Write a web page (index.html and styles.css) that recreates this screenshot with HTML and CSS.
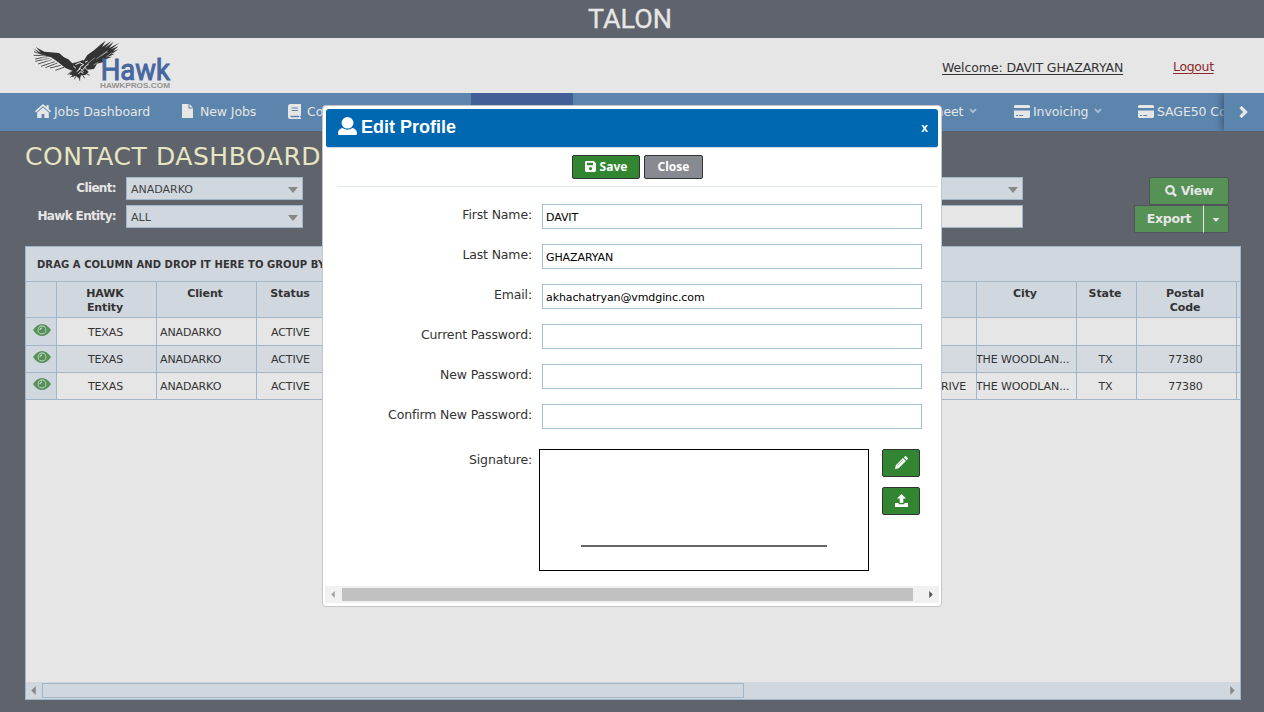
FILE: index.html
```html
<!DOCTYPE html>
<html lang="en">
<head>
<meta charset="utf-8">
<title>Talon - Contact Dashboard</title>
<link rel="stylesheet" href="styles.css">
</head>
<body>
<svg class="sprite" aria-hidden="true">
  <symbol id="home" viewBox="0 0 16 14"><path d="M8 0 0 7l1 1.400L8 2.300l7 6.100L16 7l-2.300-2V1h-2.200v2z"/><path d="M8 3.400 2.200 8.400V14h4.400v-4h2.800v4h4.400V8.400z"/></symbol>
  <symbol id="file" viewBox="0 0 11 14"><path d="M0 0h6.500v4.500H11V14H0z"/><path d="M7.500 0 11 3.500H7.500z"/></symbol>
  <symbol id="book" viewBox="0 0 13 15"><path fill-rule="evenodd" d="M2.500 0H13v11.500l-.7.5v1.500l.7.500v1H2.500A2.500 2.500 0 0 1 0 12.500v-10A2.500 2.500 0 0 1 2.500 0zM3.500 3.500v1H10v-1zM3.500 6v1H10V6zM2.600 11.800v1.400h8.600v-1.400z"/></symbol>
  <symbol id="card" viewBox="0 0 16 13"><path fill-rule="evenodd" d="M1 0h14l1 1v2H0V1zM0 5.500h16V12l-1 1H1l-1-1zM2 10v1h2v-1zM5.200 10v1h4v-1z"/></symbol>
  <symbol id="down" viewBox="0 0 8 6"><path d="m1 1.200 3 3 3-3" fill="none" stroke="currentColor" stroke-width="1.900"/></symbol>
  <symbol id="tri" viewBox="0 0 10 6"><path d="M0 0h10L5 6z"/></symbol>
  <symbol id="left" viewBox="0 0 5 10"><path d="M5 0v10L0 5z"/></symbol>
  <symbol id="right" viewBox="0 0 5 10"><path d="M0 0v10l5-5z"/></symbol>
  <symbol id="eye" viewBox="0 0 18 12"><path fill-rule="evenodd" d="M0 6Q4 0 9 0t9 6q-4 6-9 6T0 6zM9 1.600a4.400 4.400 0 1 0 0 8.800 4.400 4.400 0 0 0 0-8.800z"/><circle cx="9" cy="6" r="3.600"/><path d="M6.900 6Q7 4 9 3.900" fill="none" stroke="#e6e6e6" stroke-width="1"/></symbol>
  <symbol id="search" viewBox="0 0 12 12"><circle cx="5" cy="5" r="3.800" fill="none" stroke="currentColor" stroke-width="2.200"/><path d="m7.600 7.600 3.500 3.500" stroke="currentColor" stroke-width="2.600"/></symbol>
  <symbol id="user" viewBox="0 0 19 18"><ellipse cx="9.500" cy="5.800" rx="6" ry="5.800"/><path d="M0 16.500C0 13 2 11.800 4.500 11q5 3.400 10 0C17 11.800 19 13 19 16.500q0 1.500-1.500 1.500h-16Q0 18 0 16.500z"/></symbol>
  <symbol id="save" viewBox="0 0 11 11"><path fill-rule="evenodd" d="M1 0h7.800L11 2.200V10l-1 1H1l-1-1V1zM2 1.700v2.600h6V1.700zM5.500 6a1.600 1.600 0 1 0 0 3.200 1.600 1.600 0 0 0 0-3.200z"/></symbol>
  <symbol id="pencil" viewBox="0 0 13 13"><path d="M0 13 .8 9.300 8 2.100 10.900 5 3.700 12.200zM8.800 1.300 9.700.4q.8-.8 1.600 0l1.300 1.300q.8.800 0 1.600l-.9.900z"/><path d="m2.300 9.700 5.500-5.500" stroke="#328632" stroke-width=".5"/></symbol>
  <symbol id="upload" viewBox="0 0 13 13"><path d="M6.500 0 11 4.500H8.300V9H4.700V4.500H2zM0 9h3.600v1.300h5.800V9H13v4H0z"/></symbol>
</svg>

<div class="page">
  <header class="topbar">
    <svg class="talon" viewBox="0 0 96 34"><text x="6" y="25.500" textLength="84" lengthAdjust="spacingAndGlyphs">TALON</text></svg>
  </header>

  <div class="brandbar">
    <svg class="hawk-logo" viewBox="0 0 465 174">
      <g fill="#333">
        <path d="M24 37 48 50 32 33 58 47 102 51 117 64 130 70 142 82 158 78 174 72 185 82 178 99 163 108 145 106 121 96 99 78 78 64 49 57z"/>
        <path d="M176 74 187 57 207 43 228 25 242 14 231 33 259 15 240 36 266 17 252 37 283 20 258 40 280 31 264 46 281 40 258 55 270 53 248 63 261 62 237 72 244 76 216 83 207 99 187 101 178 90z"/>
        <path d="m143 105 18-14 16 2 14 15-10 9-13 1-4 11-12-10-11 5 1-8-9 1 5-7-6-1z"/>
      </g>
      <g fill="none" stroke="#333" stroke-width="2.500">
        <path d="M54 57 27 47M60 59 26 58M67 62 30 69M73 67 31 76M80 71 39 84M89 77 48 91M97 81 61 95M107 88 75 96M117 94 91 103"/>
        <path d="m146 108-18 7M151 112l-15 12M157 113l-9 17M164 115v19M170 113l9 14M177 109l17 9"/>
      </g>
      <g fill="none" stroke="#e6e6e6" stroke-width="3">
        <path d="m151 86 14-6 11 6-8 4-7 11M170 106l12-16 9-6M155 107l11-9 10 9M153 97l-8-7M180 79l8-4M160 114l7-7 8 5"/>
        <path d="M40 54 64 61M46 61 74 69M50 69 83 76M64 78 91 84M187 84l13-11 10-8M214 69l19-14 16-8M229 61l17-17M244 63l16-13M205 87l15-8" stroke-width="1.500"/>
      </g>
      <text class="hawk-name" x="227" y="132" textLength="208" lengthAdjust="spacingAndGlyphs">Hawk</text>
      <text class="hawk-site" x="225" y="155" textLength="210" lengthAdjust="spacingAndGlyphs">HAWKPROS.COM</text>
    </svg>
    <div class="account"><a class="welcome">Welcome: DAVIT GHAZARYAN</a><a class="logout">Logout</a></div>
  </div>

  <nav class="nav">
    <div class="nav-items">
      <a><svg class="i-home"><use href="#home"/></svg>Jobs Dashboard</a>
      <a><svg class="i-file"><use href="#file"/></svg>New Jobs</a>
      <a><svg class="i-book"><use href="#book"/></svg>Contacts</a>
      <a class="active"></a>
      <a></a>
      <a><svg class="i-sheet"><use href="#file"/></svg></a>
      <a><svg class="i-sheet"><use href="#file"/></svg>Timesheet<svg class="i-down"><use href="#down"/></svg></a>
      <a><svg class="i-card"><use href="#card"/></svg>Invoicing<svg class="i-down"><use href="#down"/></svg></a>
      <a><svg class="i-card"><use href="#card"/></svg>SAGE50 Contacts</a>
    </div>
    <div class="nav-next"><svg viewBox="0 0 9 12"><path d="m1.500 1 5 5-5 5" fill="none" stroke="currentColor" stroke-width="3.200"/></svg></div>
  </nav>

  <main>
    <h1><span>CONTACT DASHBOARD</span></h1>
    <section class="filters">
      <label>Client:</label><div class="select">ANADARKO<svg><use href="#tri"/></svg></div>
      <div class="select far"><svg><use href="#tri"/></svg></div>
      <div class="actions"><button class="btn view"><svg><use href="#search"/></svg>View</button></div>
      <label>Hawk Entity:</label><div class="select">ALL<svg><use href="#tri"/></svg></div>
      <div class="select far plain"></div>
      <div class="actions"><button class="btn export">Export</button><button class="btn caret"><svg><use href="#tri"/></svg></button></div>
    </section>

    <section class="datagrid">
      <div class="group"><span>DRAG A COLUMN AND DROP IT HERE TO GROUP BY</span></div>
      <div class="row head"><b></b><b>HAWK<br>Entity</b><b>Client</b><b>Status</b><b></b><b>City</b><b>State</b><b>Postal<br>Code</b><b></b></div>
      <div class="row"><i><svg><use href="#eye"/></svg></i><i>TEXAS</i><i class="l">ANADARKO</i><i>ACTIVE</i><i></i><i></i><i></i><i></i><i></i></div>
      <div class="row alt"><i><svg><use href="#eye"/></svg></i><i>TEXAS</i><i class="l">ANADARKO</i><i>ACTIVE</i><i></i><i class="city">THE WOODLAN...</i><i>TX</i><i>77380</i><i></i></div>
      <div class="row"><i><svg><use href="#eye"/></svg></i><i>TEXAS</i><i class="l">ANADARKO</i><i>ACTIVE</i><i class="r">DRIVE</i><i class="city">THE WOODLAN...</i><i>TX</i><i>77380</i><i></i></div>
      <div class="blank"></div>
      <div class="hscroll"><svg><use href="#left"/></svg><div class="thumb"></div><svg><use href="#right"/></svg></div>
    </section>
  </main>

  <div class="modal">
    <div class="modal-head"><svg><use href="#user"/></svg><span class="modal-title">Edit Profile</span><span class="x">x</span></div>
    <div class="modal-actions"><button class="mbtn save"><svg><use href="#save"/></svg>Save</button><button class="mbtn close">Close</button></div>
    <form>
      <div class="field"><label>First Name:</label><div class="input">DAVIT</div></div>
      <div class="field"><label>Last Name:</label><div class="input">GHAZARYAN</div></div>
      <div class="field"><label>Email:</label><div class="input">akhachatryan@vmdginc.com</div></div>
      <div class="field"><label>Current Password:</label><div class="input"></div></div>
      <div class="field"><label>New Password:</label><div class="input"></div></div>
      <div class="field"><label>Confirm New Password:</label><div class="input"></div></div>
      <div class="field sign"><label>Signature:</label><div class="pad"><div></div></div>
        <div class="tools"><button class="mbtn"><svg><use href="#pencil"/></svg></button><button class="mbtn"><svg><use href="#upload"/></svg></button></div></div>
    </form>
    <div class="mscroll"><svg class="dim"><use href="#left"/></svg><div></div><svg><use href="#right"/></svg></div>
  </div>
</div>
</body>
</html>
```
FILE: styles.css
```css
* { box-sizing: border-box; }
body { margin: 0; font: 12px "DejaVu Sans", sans-serif; color: #333; background: #5f636c; }
svg { fill: currentColor; flex: none; }
button { font-family: inherit; margin: 0; padding: 0; }
.sprite { display: none; }
.page { position: relative; width: 1264px; height: 712px; overflow: hidden; }

.topbar { height: 38px; display: flex; justify-content: center; padding-top: 2px; }
.talon { width: 96px; height: 34px; margin-right: 4px; color: #e6e6e6; }
.talon text { font: 25.500px Roboto, sans-serif; stroke: #e6e6e6; stroke-width: .3; }

.brandbar { height: 55px; background: #e6e6e6; display: flex; justify-content: space-between; }
.hawk-logo { width: 155px; height: 58px; margin: -2px 0 -1px 25px; }
.hawk-name { font: 400 86px Roboto, sans-serif; fill: #4767a0; stroke: #4767a0; stroke-width: 3; }
.hawk-site { font: bold 24px "Liberation Sans", sans-serif; fill: #929292; }
.account { display: flex; gap: 50px; padding: 21px 50px 0 0; font-size: 12.5px; line-height: 15px; }
.account a { white-space: nowrap; text-decoration: underline; text-underline-offset: 2px; }
.welcome { width: 181px; padding-top: 1px; letter-spacing: -.1px; }
.logout { width: 41px; color: #8d2929; letter-spacing: -.35px; }

.nav { height: 38px; background: #5b85ad; display: flex; color: #e6e6e6; }
.nav-items { width: 1224px; overflow: hidden; padding-left: 35px; display: grid; grid-template-columns: 147px 106px 183px 102px 199px 112px 130px 124px 86px; }
.nav-items a { display: flex; align-items: center; white-space: nowrap; font-size: 12.5px; letter-spacing: -.1px; padding-bottom: 2px; }
.nav-items .active { background: #435f97; }
.i-home { width: 16px; height: 14px; margin-right: 3px; }
.i-file { width: 11px; height: 14px; margin-right: 7px; }
.i-book { width: 13px; height: 15px; margin-right: 6px; }
.i-sheet { width: 10px; height: 15px; margin-right: 5px; }
.i-card { width: 16px; height: 13px; margin-right: 3px; }
.i-down { width: 8px; height: 6px; margin-left: 6px; color: #abc0d4; }
.nav-next { width: 40px; background: #5b85ad; box-shadow: -2px 0 7px #3c5975; display: flex; align-items: center; padding-left: 15px; clip-path: inset(0 0 0 -10px); }
.nav-next svg { width: 9px; height: 12px; }

main { padding: 8px 23px 0 25px; }
h1 { margin: 0; height: 38px; font-size: 25px; line-height: 35px; font-weight: 400; color: #e6e6c3; letter-spacing: .55px; white-space: nowrap; }
.filters { display: grid; grid-template-columns: 91px 177px 1fr 206px; column-gap: 10px; grid-auto-rows: 28px; margin-right: 2px; }
.filters label { font-weight: bold; font-size: 12px; line-height: 22px; text-align: right; color: #e6e6e6; white-space: nowrap; letter-spacing: -.65px; }
.select { height: 23px; border: 1px solid #a2b6c9; background: #d0d7df; font-size: 11px; color: #444; padding: 2px 4px 0; display: flex; align-items: center; justify-content: space-between; }
.select svg { width: 10px; height: 6px; color: #888; }
.far { justify-content: flex-end; margin-left: 60px; }
.plain { background: #e6e6e6; }
.actions { display: flex; justify-content: flex-end; padding-right: 10px; }
.btn { height: 28px; border: 1px solid #50545a; border-radius: 2px; background: #569156; color: #e6e6e6; font-weight: bold; font-size: 12.5px; display: flex; align-items: center; justify-content: center; padding-bottom: 1px; letter-spacing: -.3px; }
.view { width: 80px; gap: 4px; }
.view svg { width: 12px; height: 12px; }
.export { width: 70px; border-right: 1px solid #e6e6e6; border-radius: 2px 0 0 2px; }
.caret { width: 25px; border-left: 0; border-radius: 0 2px 2px 0; padding-top: 3px; }
.caret svg { width: 8px; height: 4px; }

.datagrid { width: 1216px; height: 454px; margin-top: 13px; border: 1px solid #a2b6c9; background: #e6e6e6; display: flex; flex-direction: column; }
.group { height: 35px; flex: none; background: #d0d7df; border-bottom: 1px solid #a2b6c9; padding-left: 11px; font: bold 10px/36px "DejaVu Sans", sans-serif; letter-spacing: .07px; white-space: nowrap; }
.row { flex: none; height: 27px; display: grid; grid-template-columns: 31px 100px 100px 70px 650px 100px 60px 100px 3px; border-bottom: 1px solid #a2b6c9; font-size: 11px; }
.group + .row { height: 36px; }
.head + .row { height: 28px; }
.row > * { border-right: 1px solid #a2b6c9; text-align: center; font-style: normal; line-height: 28px; overflow: hidden; white-space: nowrap; letter-spacing: -.1px; padding-right: 2px; }
.row > :last-child { border-right: 0; padding: 0; }
.head + .row > * { line-height: 29px; }
.head { background: #d0d7df; }
.head > b { line-height: 14px; padding-top: 5px; padding-right: 3px; letter-spacing: -.1px; }
.row > i:first-child { background: #d0d7df; display: flex; justify-content: center; padding: 5px 0 0 1px; }
.head + .row > i:first-child { padding-top: 6px; }
.row i svg { width: 18px; height: 12px; color: #569156; }
.alt { background: #d5dae1; }
.row > .l { text-align: left; padding-left: 3px; }
.row > .r { text-align: right; padding-right: 10px; }
.row > .city { text-align: left; padding: 0; text-indent: -1px; }
.blank { flex: 1; }
.hscroll { height: 17px; background: #d0d7df; display: flex; align-items: center; padding: 0 5px; }
.hscroll svg { width: 5px; height: 9px; color: #888; }
.thumb { width: 702px; height: 15px; border: 1px solid #a2b6c9; margin: 0 auto 0 6px; }

.modal { position: absolute; left: 322px; top: 105px; width: 620px; height: 502px; background: #fff; border: 1px solid #c4c6c9; border-radius: 4px; padding: 3px 2px 3px 3px; display: flex; flex-direction: column; }
.modal-head { height: 39px; flex: none; margin-right: 1px; background: #0067b1; border-bottom: 1px solid #d5d9dd; border-radius: 3px; display: flex; align-items: center; padding: 0 10px 2px 12px; color: #fff; font: bold 18px "Liberation Sans", sans-serif; }
.modal-head svg { width: 19px; height: 18px; margin: -2px 5px 0 0; }
.modal-title { margin-left: -1px; }
.x { margin-left: auto; font: bold 12px "Liberation Sans", sans-serif; padding-top: 2px; }
.modal-actions { height: 39px; margin: 0 1px 0 11px; border-bottom: 1px solid #dfe6ed; padding: 7px 0 0 235px; display: flex; gap: 4px; }
.mbtn { background: #328632; border: 1px solid #333; border-radius: 2px; color: #fff; display: flex; align-items: center; justify-content: center; font: bold 12px "Noto Sans", sans-serif; padding-bottom: 1px; }
.save { width: 68px; height: 24px; gap: 4px; }
.save svg { width: 11px; height: 11px; }
.close { width: 59px; height: 24px; background: #878a90; }
form { padding-top: 17px; }
.field { height: 40px; display: flex; }
.field label { width: 206px; text-align: right; font-size: 12.5px; line-height: 21px; white-space: nowrap; margin-right: 10px; letter-spacing: -.15px; }
.input { width: 380px; height: 25px; border: 1px solid #a4bed4; padding-left: 3px; font-size: 11px; line-height: 25px; color: #000; letter-spacing: -.1px; white-space: nowrap; }
.sign { padding-top: 5px; height: 127px; }
.sign label { margin-right: 7px; }
.pad { width: 330px; height: 122px; border: 1px solid #000; padding: 95px 41px 0; }
.pad div { height: 2px; background: #666; }
.tools { margin-left: 13px; display: flex; flex-direction: column; gap: 10px; }
.tools .mbtn { width: 38px; height: 28px; }
.tools svg { width: 13px; height: 13px; }
.mscroll { margin: auto 0 0 -1px; height: 17px; flex: none; background: #f1f1f1; display: flex; align-items: center; padding: 0 6px 0 6px; color: #505050; }
.mscroll svg { width: 4px; height: 7px; }
.mscroll .dim { color: #a3a3a3; }
.mscroll div { width: 571px; height: 13px; background: #c1c1c1; margin: 0 auto 0 7px; }
```
